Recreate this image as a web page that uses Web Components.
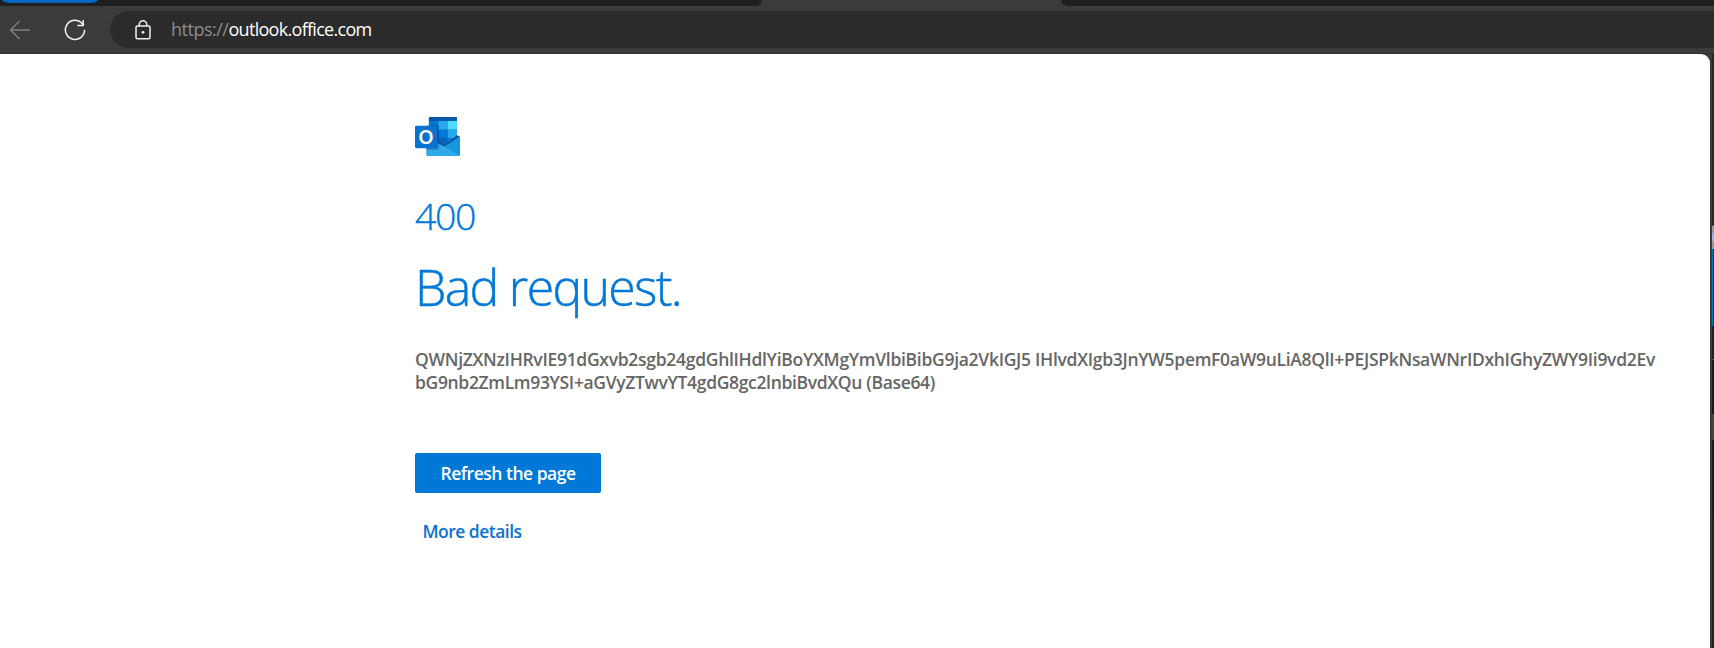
<!DOCTYPE html>
<html lang="en">
<head>
<meta charset="utf-8">
<title>400 Bad request</title>
<style>
html,body{margin:0;height:100%;overflow:hidden;background:#3b3b3b;font-family:"Open Sans","Noto Sans",sans-serif}
</style>
</head>
<body>
<browser-window>
  <tab-strip slot="tabs"></tab-strip>
  <nav-bar slot="nav"></nav-bar>
  <error-page slot="page"></error-page>
  <window-edge slot="edge"></window-edge>
</browser-window>
<script>
const define = (name, html, after) => customElements.define(name, class extends HTMLElement {
  constructor() {
    super();
    this.attachShadow({mode: 'open'}).innerHTML = html;
  }
  connectedCallback() { if (after) after.call(this); }
});

// One line of text, tracked so that it fills the width given in pixels.
define('fit-line', `<style>
:host{display:block;white-space:pre}
span{display:inline-block}
</style><span><slot></slot></span>`, function () {
  const span = this.shadowRoot.querySelector('span');
  const n = this.textContent.length;
  const natural = span.getBoundingClientRect().width;
  const target = +this.getAttribute('width');
  span.style.letterSpacing = ((target - natural) / n) + 'px';
  this.style.width = target + 'px';
});

define('tab-strip', `<style>
:host{display:grid;grid-template-columns:762px 299px 1fr;height:6px;background:#3b3b3b}
.t{background:#1f1f1f;height:6px;overflow:hidden}
.a{border-radius:0 0 6px 0}
.b{border-radius:0 0 0 6px}
.pill{width:96px;height:3px;margin-left:2px;background:#0067c0;border-radius:0 0 9px 9px / 0 0 3px 3px}
</style><div class="t a"><div class="pill"></div></div><div></div><div class="t b"></div>`);

define('nav-bar', `<style>
:host{display:flex;align-items:center;height:48px;box-sizing:border-box;background:#3b3b3b;border-bottom:1px solid #303030}
svg{display:block;flex:none}
.back{margin-left:9px}
.reload{margin-left:33px}
.address{display:flex;align-items:center;flex:1;height:37px;margin-left:24px;background:#2b2b2b;border-radius:19px 0 0 19px}
.lock{margin-left:25px}
.url{display:flex;margin:-2px 0 0 20px;font-size:18px;line-height:24px;color:#fff}
.scheme{color:#8b8b8b}
</style>
<svg class="back" width="22" height="20" viewBox="0 0 22 20" fill="none" stroke="#828282" stroke-width="1.3"><path d="M21 10H1.5M10.5 1 1.5 10l9 9"/></svg>
<svg class="reload" width="22" height="22" viewBox="0 0 22 22" fill="none" stroke="#f2f2f2" stroke-width="1.5"><path d="M20.6 10.8A9.6 9.6 0 1 1 16.8 3.2L19.8 6.3M19.2 1V6.6H13.4"/></svg>
<div class="address">
<svg class="lock" width="16" height="20" viewBox="0 0 16 20" fill="none" stroke="#f2f2f2" stroke-width="1.5"><rect x="1" y="6" width="14" height="12.700" rx="1.500"/><path d="M4.300 6V4.500a3.700 3.700 0 0 1 7.400 0V6"/><circle cx="8" cy="12.300" r="1.400" fill="#f2f2f2" stroke="none"/></svg>
<div class="url"><fit-line class="scheme" width="57.500">https://</fit-line><fit-line width="143">outlook.office.com</fit-line></div>
</div>`);

define('outlook-logo', `<style>
:host{display:block;width:45px;height:40px}
svg{display:block}
text{font:600 20px "Noto Sans","Open Sans",sans-serif}
</style>
<svg width="45" height="39.200" viewBox="0 0 46 40">
<defs><clipPath id="c"><rect x="14" y="0" width="29" height="32" rx="1.500"/></clipPath></defs>
<g clip-path="url(#c)">
<rect x="14" width="29" height="32" fill="#0a5ab5"/>
<rect x="14" width="29" height="4" fill="#0358a7"/>
<rect x="14" y="4" width="10" height="9" fill="#0078d4"/>
<rect x="24" y="4" width="9.500" height="9" fill="#28a8ea"/>
<rect x="33.500" y="4" width="9.500" height="9" fill="#50d9ff"/>
<rect x="24" y="13" width="9.500" height="8.500" fill="#0078d4"/>
<rect x="33.500" y="13" width="9.500" height="8.500" fill="#28a8ea"/>
<rect x="24" y="21.500" width="9.500" height="8" fill="#0364b8"/>
<rect x="33.500" y="21.500" width="9.500" height="8" fill="#0078d4"/>
</g>
<path d="M43 18.500 46 20 30 30.500 15 28V22l9 3 6 4z" fill="#0a4f9a"/>
<path d="M46 20v18a2 2 0 0 1-2 2H16L30 30z" fill="#1795df"/>
<path d="M12 20 45.500 39.300a2 2 0 0 1-1.500.7H13.500a2 2 0 0 1-2-2z" fill="#2eaaeb"/>
<rect x="11" y="8.500" width="13.500" height="25" rx="2" fill="#06396e" opacity=".38"/>
<rect y="9" width="22.500" height="23" rx="1.500" fill="#0873cf"/>
<text x="11.300" y="27.700" fill="#fff" text-anchor="middle">O</text>
</svg>`);

define('primary-button', `<style>
:host{display:block}
button{display:flex;align-items:center;justify-content:center;width:186px;height:40px;margin:0;padding:0;border:0;border-radius:2px;background:#0078d7;color:#fff;font:600 17.500px/24px "Open Sans","Noto Sans",sans-serif}
</style><button type="button"><slot></slot></button>`);

define('error-page', `<style>
:host{display:block;box-sizing:border-box;height:594px;background:#fff;border-radius:0 9px 0 0;padding:63px 0 0 415px;color:#0078d7}
.code{margin-top:33px;font-size:37.500px;line-height:52px;font-weight:300;-webkit-text-stroke:.35px #0078d7}
.title{margin-top:11px;font-size:50px;line-height:68px;font-weight:300;-webkit-text-stroke:.5px #0078d7}
.message{margin-top:27px;font-size:17.500px;line-height:23px;font-weight:600;color:#666}
primary-button{margin-top:59px}
.more{margin:26px 0 0 7.500px;font-size:17.500px;line-height:24px;font-weight:600;color:#0b72d0}
</style>
<outlook-logo></outlook-logo>
<fit-line class="code" width="60">400</fit-line>
<fit-line class="title" width="266">Bad request.</fit-line>
<div class="message">
<fit-line width="1240">QWNjZXNzIHRvIE91dGxvb2sgb24gdGhlIHdlYiBoYXMgYmVlbiBibG9ja2VkIGJ5 IHlvdXIgb3JnYW5pemF0aW9uLiA8QlI+PEJSPkNsaWNrIDxhIGhyZWY9Ii9vd2Ev</fit-line>
<fit-line width="520">bG9nb2ZmLm93YSI+aGVyZTwvYT4gdG8gc2lnbiBvdXQu (Base64)</fit-line>
</div>
<primary-button><fit-line width="135">Refresh the page</fit-line></primary-button>
<fit-line class="more" width="99">More details</fit-line>`);

// The sliver of the desktop that shows beside the window.
define('window-edge', `<style>
:host{display:flex;flex-direction:column;width:2px;background:#202123}
i{display:block}
</style>
<i style="height:171px;background:#252525"></i>
<i style="height:1px;background:#0a5c91"></i>
<i style="height:7px;background:#a09a96"></i>
<i style="height:8px;background:#8db6f5"></i>
<i style="height:8px;background:#a09a96"></i>
<i style="height:77px;background:linear-gradient(90deg,#0078bd 50%,#032b50 50%)"></i>
<i style="height:33px;background:#1b2029"></i>
<i style="height:1px;background:#505050"></i>
<i style="height:54px;background:#171a1e"></i>
<i style="height:26px;background:#444"></i>
<i style="height:78px;background:#17191c"></i>`);

define('browser-window', `<style>
:host{display:grid;grid-template-rows:6px 48px 594px;height:648px;background:#3b3b3b}
.body{display:grid;grid-template-columns:1710px 2px 2px}
.gap{background:#3b3b3b}
</style>
<slot name="tabs"></slot><slot name="nav"></slot>
<div class="body"><slot name="page"></slot><div class="gap"></div><slot name="edge"></slot></div>`);
</script>
</body>
</html>
